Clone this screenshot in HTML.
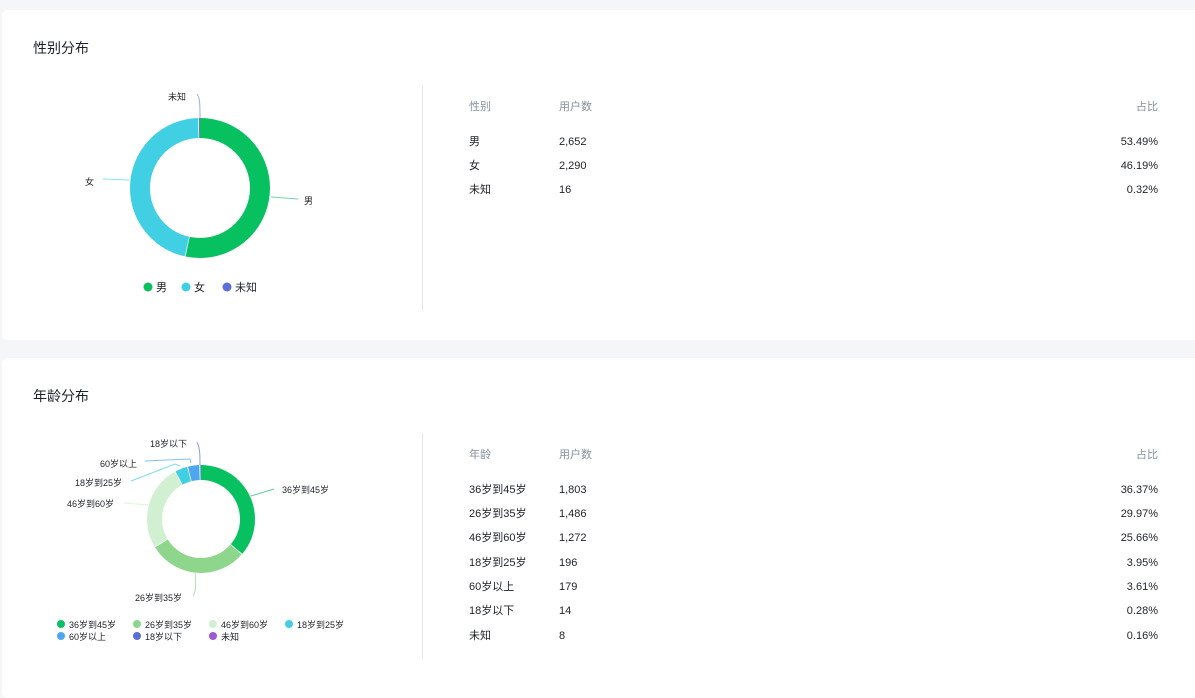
<!DOCTYPE html>
<html><head><meta charset="utf-8"><style>
*{margin:0;padding:0;box-sizing:border-box}
body{width:1195px;height:680px;background:#f5f6f8;font-family:"Liberation Sans","Noto Sans CJK SC",sans-serif;position:relative;overflow:hidden;color:#1d2129}
.card{position:absolute;left:2px;width:1200px;background:#fff;border-radius:6px}
.t{position:absolute;font-size:14px;color:#1d2129}
.div{position:absolute;left:422px;width:1px;background:#e5e6eb}
.c{position:absolute;font-size:11px;line-height:14px;white-space:nowrap}
.h{color:#86909c}
.r{text-align:right;right:37px}
svg{position:absolute;left:0;top:0}
svg text{font-family:"Liberation Sans","Noto Sans CJK SC",sans-serif;font-size:9px;fill:#1d2129}
</style></head><body>
<div class="card" style="top:10px;height:330px"></div>
<div class="card" style="top:358px;height:340px"></div>
<div class="t" style="left:33px;top:38px">性别分布</div>
<div class="t" style="left:33px;top:386px">年龄分布</div>
<div class="div" style="top:85px;height:225px"></div>
<div class="div" style="top:433px;height:225px"></div>

<div class="c h" style="left:469px;top:100px">性别</div><div class="c h" style="left:559px;top:100px">用户数</div><div class="c h r" style="top:100px">占比</div>
<div class="c" style="left:469px;top:135px">男</div><div class="c" style="left:559px;top:135px">2,652</div><div class="c r" style="top:135px">53.49%</div>
<div class="c" style="left:469px;top:159px">女</div><div class="c" style="left:559px;top:159px">2,290</div><div class="c r" style="top:159px">46.19%</div>
<div class="c" style="left:469px;top:183px">未知</div><div class="c" style="left:559px;top:183px">16</div><div class="c r" style="top:183px">0.32%</div>

<div class="c h" style="left:469px;top:448px">年龄</div><div class="c h" style="left:559px;top:448px">用户数</div><div class="c h r" style="top:448px">占比</div>
<div class="c" style="left:469px;top:483px">36岁到45岁</div><div class="c" style="left:559px;top:483px">1,803</div><div class="c r" style="top:483px">36.37%</div>
<div class="c" style="left:469px;top:507px">26岁到35岁</div><div class="c" style="left:559px;top:507px">1,486</div><div class="c r" style="top:507px">29.97%</div>
<div class="c" style="left:469px;top:531px">46岁到60岁</div><div class="c" style="left:559px;top:531px">1,272</div><div class="c r" style="top:531px">25.66%</div>
<div class="c" style="left:469px;top:556px">18岁到25岁</div><div class="c" style="left:559px;top:556px">196</div><div class="c r" style="top:556px">3.95%</div>
<div class="c" style="left:469px;top:580px">60岁以上</div><div class="c" style="left:559px;top:580px">179</div><div class="c r" style="top:580px">3.61%</div>
<div class="c" style="left:469px;top:604px">18岁以下</div><div class="c" style="left:559px;top:604px">14</div><div class="c r" style="top:604px">0.28%</div>
<div class="c" style="left:469px;top:629px">未知</div><div class="c" style="left:559px;top:629px">8</div><div class="c r" style="top:629px">0.16%</div>

<svg width="420" height="680" viewBox="0 0 420 680">
<g transform="rotate(-90 200 188)" fill="none" stroke-width="20">
<circle cx="200" cy="188" r="60" stroke="#07c160" stroke-dasharray="200.9 377" stroke-dashoffset="0"/>
<circle cx="200" cy="188" r="60" stroke="#40cfe3" stroke-dasharray="173.4 377" stroke-dashoffset="-201.65"/>
<circle cx="200" cy="188" r="60" stroke="#5b6fd6" stroke-dasharray="1 377" stroke-dashoffset="-375.8"/>
</g>
<polyline points="271,197 298,199" stroke="#07c160" fill="none" stroke-width="1" opacity=".6"/>
<polyline points="129,180 103,179" stroke="#40cfe3" fill="none" stroke-width="1" opacity=".6"/>
<path d="M200,118 C200,105 200,98 197,94" stroke="#5b6fd6" fill="none" stroke-width="1" opacity=".6"/>
<text x="304" y="204">男</text><text x="85" y="185">女</text><text x="168" y="100">未知</text>
<circle cx="148" cy="287" r="4.5" fill="#07c160"/><text x="156" y="291" style="font-size:11px">男</text>
<circle cx="186" cy="287" r="4.5" fill="#40cfe3"/><text x="194" y="291" style="font-size:11px">女</text>
<circle cx="227" cy="287" r="4.5" fill="#5b6fd6"/><text x="235" y="291" style="font-size:11px">未知</text>

<g transform="rotate(-90 201 519)" fill="none" stroke-width="15">
<circle cx="201" cy="519" r="46.5" stroke="#07c160" stroke-dasharray="105.5 293" stroke-dashoffset="0"/>
<circle cx="201" cy="519" r="46.5" stroke="#8fd68d" stroke-dasharray="86.8 293" stroke-dashoffset="-106.26"/>
<circle cx="201" cy="519" r="46.5" stroke="#d1f0d1" stroke-dasharray="74.2 293" stroke-dashoffset="-193.82"/>
<circle cx="201" cy="519" r="46.5" stroke="#40cfe3" stroke-dasharray="10.8 293" stroke-dashoffset="-268.79"/>
<circle cx="201" cy="519" r="46.5" stroke="#4ea6f0" stroke-dasharray="9.8 293" stroke-dashoffset="-280.33"/>
<circle cx="201" cy="519" r="46.5" stroke="#5b6fd6" stroke-dasharray="0.6 293" stroke-dashoffset="-290.88"/>
<circle cx="201" cy="519" r="46.5" stroke="#9b59d6" stroke-dasharray="0.4 293" stroke-dashoffset="-291.7"/>
</g>
<g fill="none" stroke-width="1" opacity=".7">
<polyline points="251,496 274,489" stroke="#07c160"/>
<path d="M195,573 C196,585 196,592 193,596" stroke="#8fd68d"/>
<polyline points="149,505 124,503" stroke="#d1f0d1"/>
<polyline points="180,466 175,464 131,481" stroke="#40cfe3"/>
<polyline points="191,463 190,459 145,461" stroke="#4ea6f0"/>
<path d="M200,465 C200,455 200,448 197,442" stroke="#5b6fd6"/>
</g>
<text x="282" y="493">36岁到45岁</text>
<text x="135" y="601">26岁到35岁</text>
<text x="67" y="507">46岁到60岁</text>
<text x="75" y="486">18岁到25岁</text>
<text x="100" y="467">60岁以上</text>
<text x="150" y="447">18岁以下</text>
<circle cx="61" cy="624" r="4" fill="#07c160"/><text x="69" y="628">36岁到45岁</text>
<circle cx="137" cy="624" r="4" fill="#8fd68d"/><text x="145" y="628">26岁到35岁</text>
<circle cx="213" cy="624" r="4" fill="#d1f0d1"/><text x="221" y="628">46岁到60岁</text>
<circle cx="289" cy="624" r="4" fill="#40cfe3"/><text x="297" y="628">18岁到25岁</text>
<circle cx="61" cy="636" r="4" fill="#4ea6f0"/><text x="69" y="640">60岁以上</text>
<circle cx="137" cy="636" r="4" fill="#5b6fd6"/><text x="145" y="640">18岁以下</text>
<circle cx="213" cy="636" r="4" fill="#9b59d6"/><text x="221" y="640">未知</text>
</svg>
</body></html>
